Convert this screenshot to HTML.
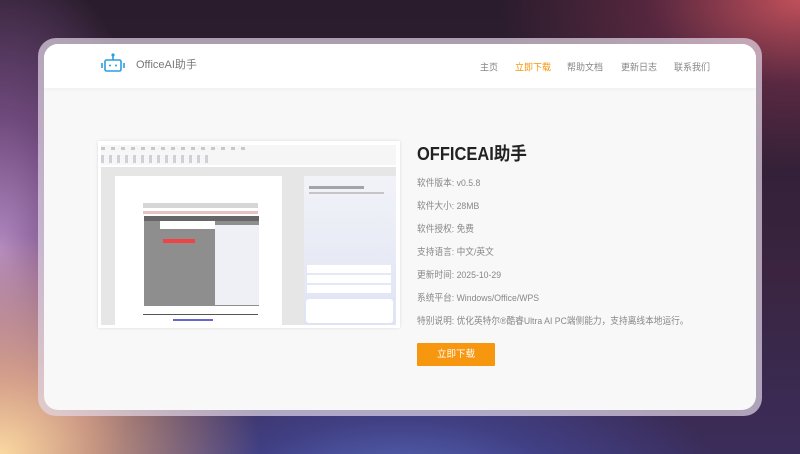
<!DOCTYPE html>
<html><head><meta charset="utf-8"><style>
*{margin:0;padding:0;box-sizing:border-box}
body{width:800px;height:454px;overflow:hidden;font-family:"Liberation Sans","Noto Sans CJK SC",sans-serif;position:relative;
background:
radial-gradient(ellipse 260px 220px at 0% 100%,#fbd8a0 0%,rgba(245,185,140,.75) 35%,rgba(0,0,0,0) 100%),
radial-gradient(ellipse 300px 170px at 100% 0%,#c0505a 0%,rgba(130,50,80,.5) 50%,rgba(0,0,0,0) 100%),
radial-gradient(ellipse 330px 160px at 50% 110%,#5a70c0 0%,rgba(70,80,170,.55) 50%,rgba(0,0,0,0) 100%),
radial-gradient(ellipse 160px 300px at 0% 55%,#b088c0 0%,rgba(150,100,170,.6) 45%,rgba(0,0,0,0) 100%),
linear-gradient(180deg,#2a1c2c 0%,#3a2440 60%,#3b2d5a 100%);}
.frame{position:absolute;left:38px;top:38px;width:724px;height:378px;border-radius:18px;background:rgba(225,215,230,.7)}
.card{position:absolute;left:44px;top:44px;width:712px;height:366px;border-radius:14px;background:#f8f8f8;overflow:hidden}
.hd{height:44px;background:#fff;box-shadow:0 2px 4px rgba(0,0,0,.03);position:relative}
.logo{position:absolute;left:56px;top:8px}
.brand{position:absolute;left:92px;top:12px;font-size:11px;color:#777}
.nav{position:absolute;top:16px;font-size:9px;color:#888;transform:scaleY(1.1)}
.shot{position:absolute;left:54px;top:97px;width:302px;height:187px;background:#fff;box-shadow:0 0 3px rgba(0,0,0,.12)}
.info{position:absolute;left:373px;top:99px;transform-origin:0 0;transform:scaleX(.915)}
.info h1{font-size:18px;font-weight:bold;color:#222;margin-bottom:12px;line-height:22px}
.info p{font-size:9.5px;color:#888;height:23px;line-height:14px;white-space:nowrap}
.btn{position:absolute;left:373px;top:299px;width:78px;height:23px;background:#f7960f;color:#fff;font-size:9.5px;text-align:center;line-height:23px;border-radius:1px}
</style></head><body>
<div class="frame"></div>
<div class="card">
 <div class="hd">
  <svg class="logo" width="26" height="22" viewBox="0 0 26 22"><g fill="none" stroke="#2a9de0" stroke-width="1.6"><rect x="5" y="8" width="16" height="11" rx="1.5"/><line x1="13" y1="4" x2="13" y2="8"/><line x1="2" y1="11" x2="2" y2="16"/><line x1="24" y1="11" x2="24" y2="16"/></g><circle cx="13" cy="3" r="1.6" fill="#2a9de0"/><circle cx="10" cy="13.5" r="1" fill="#2a9de0"/><circle cx="16" cy="13.5" r="1" fill="#2a9de0"/></svg>
  <div class="brand">OfficeAI助手</div>
  <div class="nav" style="left:436px">主页</div>
  <div class="nav" style="left:471px;color:#f7960f">立即下载</div>
  <div class="nav" style="left:523px">帮助文档</div>
  <div class="nav" style="left:577px">更新日志</div>
  <div class="nav" style="left:630px">联系我们</div>
 </div>
 <div class="shot">
  <div style="position:absolute;left:3px;top:4px;width:295px;height:20px;background:#f6f6f6"></div>
  <div style="position:absolute;left:3px;top:6px;width:150px;height:3px;background:repeating-linear-gradient(90deg,#999 0 4px,transparent 4px 10px);opacity:.5"></div>
  <div style="position:absolute;left:3px;top:14px;width:110px;height:8px;background:repeating-linear-gradient(90deg,#aab 0 3px,transparent 3px 8px);opacity:.5"></div>
  <div style="position:absolute;left:3px;top:26px;width:295px;height:158px;background:#e6e6e6"></div>
  <div style="position:absolute;left:17px;top:35px;width:167px;height:150px;background:#fff"></div>
  <div style="position:absolute;left:45px;top:62px;width:115px;height:5px;background:#bbb;opacity:.6"></div>
  <div style="position:absolute;left:45px;top:70px;width:115px;height:3px;background:#c88;opacity:.5"></div>
  <div style="position:absolute;left:46px;top:75px;width:115px;height:90px;background:#8e8e8e"></div>
  <div style="position:absolute;left:117px;top:84px;width:44px;height:80px;background:#eef0f6"></div>
  <div style="position:absolute;left:46px;top:75px;width:115px;height:5px;background:#666"></div>
  <div style="position:absolute;left:62px;top:80px;width:55px;height:8px;background:#fff"></div>
  <div style="position:absolute;left:65px;top:98px;width:32px;height:4px;background:#e44"></div>
  <div style="position:absolute;left:45px;top:173px;width:115px;height:1px;background:#555"></div>
  <div style="position:absolute;left:75px;top:178px;width:40px;height:2px;background:#66c"></div>
  <div style="position:absolute;left:206px;top:35px;width:92px;height:149px;background:linear-gradient(180deg,#f2f3f8,#dfe3f3)"></div>
  <div style="position:absolute;left:211px;top:45px;width:55px;height:3px;background:#555;opacity:.5"></div>
  <div style="position:absolute;left:211px;top:51px;width:75px;height:2px;background:#999;opacity:.5"></div>
  <div style="position:absolute;left:209px;top:124px;width:84px;height:8px;background:#fff"></div>
  <div style="position:absolute;left:209px;top:134px;width:84px;height:8px;background:#fff"></div>
  <div style="position:absolute;left:209px;top:144px;width:84px;height:8px;background:#fff"></div>
  <div style="position:absolute;left:208px;top:158px;width:87px;height:24px;background:#fff;border-radius:3px"></div>
 </div>
 <div class="info">
  <h1>OFFICEAI助手</h1>
  <p>软件版本: v0.5.8</p>
  <p>软件大小: 28MB</p>
  <p>软件授权: 免费</p>
  <p>支持语言: 中文/英文</p>
  <p>更新时间: 2025-10-29</p>
  <p>系统平台: Windows/Office/WPS</p>
  <p>特别说明: 优化英特尔®酷睿Ultra AI PC端侧能力，支持离线本地运行。</p>
 </div>
 <div class="btn">立即下载</div>
</div>
</body></html>
